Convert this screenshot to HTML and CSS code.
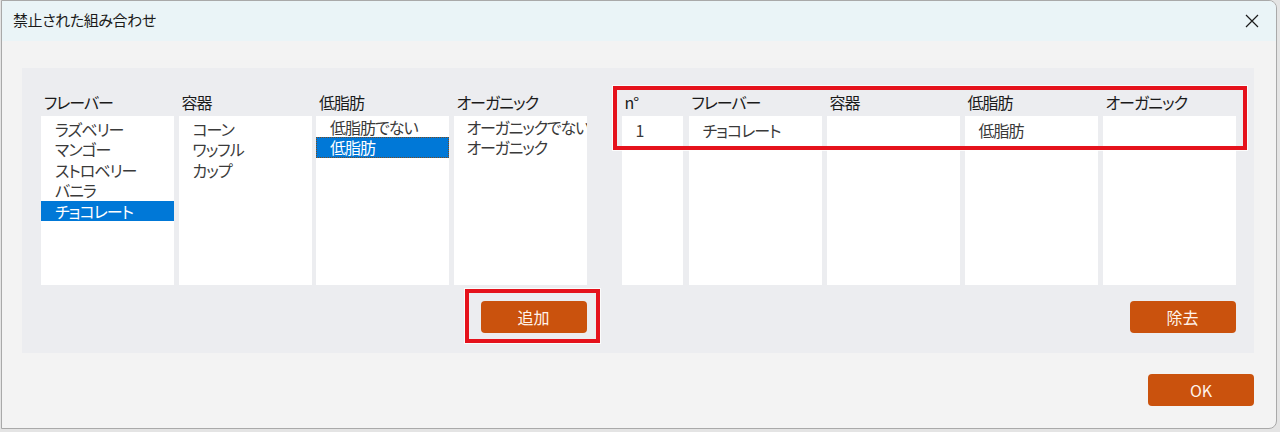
FILE: index.html
```html
<!DOCTYPE html>
<html lang="ja">
<head>
<meta charset="utf-8">
<title>禁止された組み合わせ</title>
<link rel="stylesheet" href="styles.css">
</head>
<body>
<div class="window">
  <div class="titlebar">
    <span class="title">禁止された組み合わせ</span>
    <button class="close" aria-label="閉じる">
      <svg width="14" height="14" viewBox="0 0 14 14"><path d="M1 1 L13 13 M13 1 L1 13" stroke="#1b1b1b" stroke-width="1.2" fill="none"/></svg>
    </button>
  </div>
  <div class="content">
    <div class="panel">
      <div class="section">
        <div class="lists">
          <div class="col">
            <div class="hdr">フレーバー</div>
            <ul class="list">
              <li>ラズベリー</li>
              <li>マンゴー</li>
              <li>ストロベリー</li>
              <li>バニラ</li>
              <li class="sel">チョコレート</li>
            </ul>
          </div>
          <div class="col">
            <div class="hdr">容器</div>
            <ul class="list">
              <li>コーン</li>
              <li>ワッフル</li>
              <li>カップ</li>
            </ul>
          </div>
          <div class="col">
            <div class="hdr">低脂肪</div>
            <ul class="list tight">
              <li>低脂肪でない</li>
              <li class="sel focus">低脂肪</li>
            </ul>
          </div>
          <div class="col">
            <div class="hdr">オーガニック</div>
            <ul class="list tight narrow">
              <li>オーガニックでない</li>
              <li>オーガニック</li>
            </ul>
          </div>
        </div>
        <div class="actions"><button class="btn">追加</button></div>
      </div>
      <div class="section">
        <div class="grid">
          <div class="gcol num">
            <div class="hdr">n°</div>
            <div class="gbody"><div class="cell">1</div></div>
          </div>
          <div class="gcol">
            <div class="hdr">フレーバー</div>
            <div class="gbody"><div class="cell">チョコレート</div></div>
          </div>
          <div class="gcol">
            <div class="hdr">容器</div>
            <div class="gbody"><div class="cell"></div></div>
          </div>
          <div class="gcol">
            <div class="hdr">低脂肪</div>
            <div class="gbody"><div class="cell">低脂肪</div></div>
          </div>
          <div class="gcol">
            <div class="hdr">オーガニック</div>
            <div class="gbody"><div class="cell"></div></div>
          </div>
        </div>
        <div class="actions"><button class="btn">除去</button></div>
      </div>
      <div class="mark mark-grid"></div>
      <div class="mark mark-add"></div>
    </div>
    <div class="footer"><button class="btn">OK</button></div>
  </div>
</div>
</body>
</html>
```
FILE: styles.css
```css
* { box-sizing: border-box; }
html, body { margin: 0; padding: 0; }
body {
  width: 1280px;
  height: 432px;
  overflow: hidden;
  background: #e4e4e4;
  font-family: "Noto Sans CJK JP", "Noto Sans", sans-serif;
  font-feature-settings: "palt" 1;
  padding: 0 3px 3px 1px;
}
.window {
  width: 1276px;
  height: 429px;
  border: 1px solid #a9a9a9;
  border-radius: 0 8px 8px 0;
  background: #f3f3f3;
  overflow: hidden;
}
.titlebar {
  height: 40px;
  background: #eaf4f7;
  display: flex;
  align-items: center;
  justify-content: space-between;
  padding: 0 0 0 11px;
}
.title {
  font-size: 15px;
  color: #1a1a1a;
  line-height: 20px;
  margin-top: -2px;
  letter-spacing: -0.4px;
}
.close {
  width: 46px;
  height: 40px;
  border: 0;
  background: transparent;
  display: flex;
  align-items: center;
  justify-content: center;
  padding: 0;
  margin-right: 1px;
}
.content {
  padding: 27px 22px 0 20px;
}
.panel {
  position: relative;
  height: 285px;
  background: #ecedf0;
  display: flex;
  gap: 35px;
  padding: 20px 0 0 19px;
}
.section {
  display: flex;
  flex-direction: column;
}
.lists {
  display: flex;
  gap: 4.5px;
}
.col {
  width: 133px;
}
.hdr {
  height: 28px;
  line-height: 28px;
  font-size: 16px;
  letter-spacing: -1px;
  color: #1a1a1a;
  padding-left: 3px;
  white-space: nowrap;
}
.list {
  list-style: none;
  margin: 0;
  padding: 2.5px 0 0 0;
  height: 169px;
  background: #fff;
  overflow: hidden;
}
.list.tight { padding-top: 0.5px; }
.list li {
  height: 20.5px;
  line-height: 20.5px;
  font-size: 16px;
  letter-spacing: -1px;
  color: #3a3a3a;
  padding-left: 14px;
  white-space: nowrap;
}
.list.narrow li {
  padding-left: 13px;
  letter-spacing: -1.2px;
}
.list li.sel {
  background: #0078d7;
  color: #fff;
}
.list li.focus {
  outline: 1px dotted #7a4a1c;
  outline-offset: -1px;
}
.actions {
  display: flex;
  justify-content: flex-end;
  margin-top: 16px;
}
.btn {
  width: 106px;
  height: 32px;
  border: 0;
  border-radius: 4px;
  background: #ca520d;
  color: #fff3ea;
  font-family: "Noto Sans CJK JP", "Noto Sans", sans-serif;
  font-size: 16px;
  line-height: 32px;
  padding: 0;
}
.grid {
  display: flex;
  gap: 5px;
}
.gcol { width: 133px; }
.gcol.num { width: 61px; margin-right: 1px; }
.gbody {
  height: 169px;
  background: #fff;
}
.cell {
  height: 29px;
  line-height: 29px;
  font-size: 16px;
  letter-spacing: -1px;
  color: #3a3a3a;
  padding-left: 14px;
  white-space: nowrap;
}
.mark {
  position: absolute;
  border: 4px solid #e5121c;
  box-shadow: 0 0 0 1px rgba(255,255,255,0.8);
  pointer-events: none;
}
.mark-grid {
  left: 591px;
  top: 18px;
  width: 634px;
  height: 64px;
}
.mark-add {
  left: 443px;
  top: 221px;
  width: 135px;
  height: 54px;
}
.footer {
  display: flex;
  justify-content: flex-end;
  margin-top: 21px;
}
```
